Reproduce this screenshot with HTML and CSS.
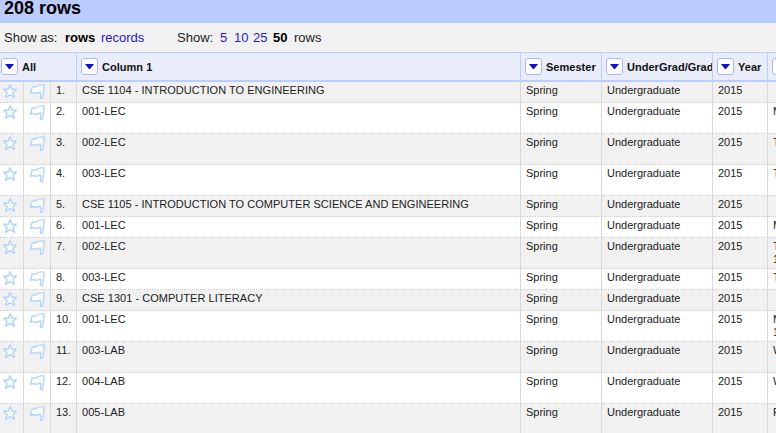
FILE: index.html
```
<!DOCTYPE html>
<html lang="en">
<head>
<meta charset="utf-8">
<title>208 rows</title>
<link rel="stylesheet" href="styles.css">
</head>
<body>
<svg class="defs" aria-hidden="true">
  <symbol id="star" viewBox="0 0 16 16"><path d="M8 1.6 L9.8 6.2 L14.4 6.2 L10.9 9.4 L12.4 14.4 L8 11.6 L3.6 14.4 L5.1 9.4 L1.6 6.2 L6.2 6.2 Z"/></symbol>
  <symbol id="flag" viewBox="0 0 16 16"><path d="M3.2 4.2 C5 3.2 6.2 4.6 7.6 3.6 C8.6 1.9 11 1.7 15 1.9 C15.4 6 14 11 13.4 15 L11.4 15.2 C11.6 12.8 11.7 10.8 11.5 9.2 C10.2 8.4 9 10.8 6.8 10.2 C5.1 9.3 3.4 9.8 1.4 10.2 C2.6 8 2.5 6 3.2 4.2 Z"/></symbol>
</svg>
<header class="summary">208 rows</header>
<nav class="controls">
  <span class="label-as">Show as:</span><b class="mode">rows</b><a class="records">records</a>
  <span class="label-show">Show:</span><a class="s5">5</a><a class="s10">10</a><a class="s25">25</a><b class="s50">50</b><span>rows</span>
</nav>
<main class="table">
  <div class="row head">
    <div class="cell all"><i class="menu"></i><span>All</span></div>
    <div class="cell"><i class="menu"></i><span>Column 1</span></div>
    <div class="cell"><i class="menu"></i><span>Semester</span></div>
    <div class="cell"><i class="menu"></i><span>UnderGrad/Grad</span></div>
    <div class="cell"><i class="menu"></i><span>Year</span></div>
    <div class="cell"><i class="menu"></i></div>
  </div>
  <div id="rows"></div>
</main>
<script src="rows.js"></script>
</body>
</html>
```
FILE: styles.css
```
* { box-sizing: border-box; }
body {
  margin: 0;
  width: 776px;
  height: 433px;
  overflow: hidden;
  background: #fff;
  color: #222;
  font-family: "Liberation Sans", Arial, sans-serif;
}
.defs { display: none; }
.summary {
  height: 23px;
  padding-left: 4px;
  background: #bbccff;
  color: #000;
  font-size: 18px;
  font-weight: bold;
  line-height: 16px;
}
.controls {
  display: flex;
  align-items: center;
  height: 29px;
  padding-left: 4px;
  background: #f1f1f1;
  font-size: 13px;
  white-space: nowrap;
}
.controls a { color: #2a17cc; }
.controls b { color: #000; }
.label-as { width: 61px; }
.mode { width: 36px; }
.records { width: 76px; }
.label-show { width: 43px; }
.s5 { width: 14px; }
.s10 { width: 19px; }
.s25 { width: 20px; }
.s50 { width: 21px; }
.table { width: 776px; overflow: hidden; }
.row {
  display: grid;
  grid-template-columns: 24px 27px 26px 444px 81px 111px 55px 8px;
  height: 21px;
  background: #fff;
  font-size: 11px;
  line-height: 13px;
}
.row:nth-child(odd) { background: #f1f1f1; }
.row.tall { height: 31px; }
.cell {
  padding: 2px 0 0 5px;
  border-right: 1px solid #d9d9d9;
  border-bottom: 1px dotted #cfcfcf;
  overflow: hidden;
  white-space: nowrap;
}
.cell:last-child { border-right: 0; }
.cell.name { letter-spacing: 0.03px; }
.cell.icon { padding: 1px 0 0 2px; }
.cell.flag { padding-left: 5px; }
.cell svg {
  display: block;
  width: 16px;
  height: 16px;
  fill: #fff;
  stroke: #b0d3fd;
  stroke-width: 1.4;
  stroke-linejoin: round;
}
.row.head {
  height: 30px;
  border-top: 1px solid #bbccff;
  border-bottom: 2px solid #bbccff;
  background: #e9ecf9;
  color: #111;
  font-weight: bold;
}
.head .cell {
  display: flex;
  align-items: center;
  padding: 0 0 0 4px;
  border-right-color: #bbccff;
  border-bottom: 0;
}
.head .cell.all { grid-column: span 3; padding-left: 1px; }
.head span { padding-top: 2px; letter-spacing: 0.02px; }
.menu {
  display: flex;
  flex: none;
  align-items: center;
  justify-content: center;
  width: 17px;
  height: 17px;
  margin-right: 4px;
  border: 1px solid #a9b9f5;
  border-radius: 3px;
  background: #fff;
}
.menu::before {
  content: "";
  width: 9px;
  height: 5px;
  background: #1111cc;
  clip-path: polygon(0 0, 100% 0, 56% 100%, 44% 100%);
}
```
FILE: rows.js
```
const rows = [
  ["CSE 1104 - INTRODUCTION TO ENGINEERING", "", 0],
  ["001-LEC", "M", 1],
  ["002-LEC", "T", 1],
  ["003-LEC", "T", 1],
  ["CSE 1105 - INTRODUCTION TO COMPUTER SCIENCE AND ENGINEERING", "", 0],
  ["001-LEC", "M", 0],
  ["002-LEC", "T<br>1", 1],
  ["003-LEC", "T", 0],
  ["CSE 1301 - COMPUTER LITERACY", "", 0],
  ["001-LEC", "M<br>1", 1],
  ["003-LAB", "W", 1],
  ["004-LAB", "W", 1],
  ["005-LAB", "F", 1]
];
document.getElementById("rows").innerHTML = rows.map(([name, day, tall], i) => `
  <div class="row${tall ? " tall" : ""}">
    <div class="cell icon"><svg><use href="#star"/></svg></div>
    <div class="cell icon flag"><svg><use href="#flag"/></svg></div>
    <div class="cell">${i + 1}.</div>
    <div class="cell name">${name}</div>
    <div class="cell">Spring</div>
    <div class="cell">Undergraduate</div>
    <div class="cell">2015</div>
    <div class="cell">${day}</div>
  </div>`).join("");
```
